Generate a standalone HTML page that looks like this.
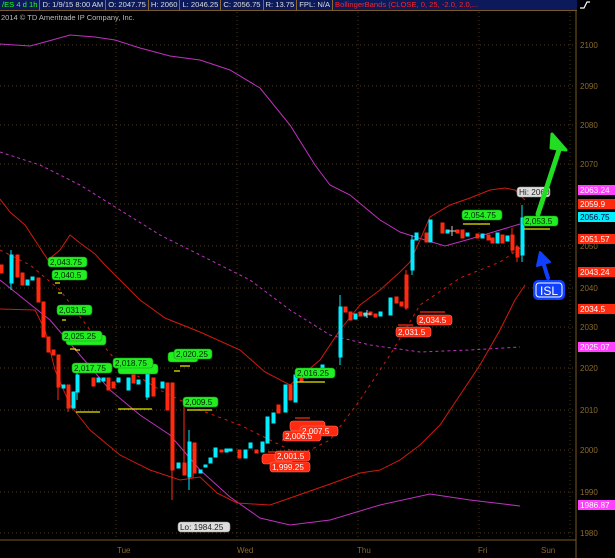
<!DOCTYPE html>
<html><head><meta charset="utf-8"><style>
html,body{margin:0;padding:0;background:#000;width:615px;height:558px;overflow:hidden;font-family:"Liberation Sans",sans-serif}
.bar{position:absolute;left:0;top:0;width:577px;height:10px;background:#0c1a5c;border-bottom:1px solid #7a5a20;display:flex;font-size:7.6px;line-height:10px;color:#ddd;white-space:nowrap}
.bar span{border-right:1px solid #8a6a2a;padding:0 2px}
</style></head><body>
<div class="bar"><span style="color:#2f2">/ES 4 d 1h</span><span>D: 1/9/15 8:00 AM</span><span>O: 2047.75</span><span>H: 2060</span><span>L: 2046.25</span><span>C: 2056.75</span><span>R: 13.75</span><span>FPL: N/A</span><span style="color:#f22;border:none">BollingerBands (CLOSE, 0, 25, -2.0, 2.0,...</span></div>
<svg width="615" height="558" style="position:absolute;left:0;top:0" font-family="Liberation Sans, sans-serif">
<rect x="577" y="0" width="38" height="11" fill="#000"/>
<path d="M580 8h4l3-6h3" stroke="#fff" fill="none" stroke-width="1.2"/>
<text x="1" y="20" fill="#bbb" font-size="7.5">2014 © TD Ameritrade IP Company, Inc.</text>
<g stroke="#6a5220" stroke-width="0.7" stroke-dasharray="1,3">
<path d="M0 45H575M0 86H575M0 125H575M0 164H575M0 204H575M0 246H575M0 288H575M0 327H575M0 368H575M0 410H575M0 450H575M0 492H575M0 533H575"/>
<path d="M116 12V540M237 12V540M358 12V540M479 12V540M570 12V540"/>
</g>
<line x1="576" y1="11" x2="576" y2="558" stroke="#7a5a20"/>
<line x1="0" y1="540" x2="576" y2="540" stroke="#7a5a20"/>
<g fill="#8a6a2a" font-size="8"><text x="580" y="48">2100</text><text x="580" y="89">2090</text><text x="580" y="128">2080</text><text x="580" y="167">2070</text><text x="580" y="249">2050</text><text x="580" y="291">2040</text><text x="580" y="330">2030</text><text x="580" y="371">2020</text><text x="580" y="413">2010</text><text x="580" y="453">2000</text><text x="580" y="495">1990</text><text x="580" y="536">1980</text>
<text x="117" y="553">Tue</text><text x="237" y="553">Wed</text><text x="357" y="553">Thu</text><text x="478" y="553">Fri</text><text x="541" y="553">Sun</text></g>
<g fill="none" stroke-width="1">
<path stroke="#c030c0" d="M0 44L30 46L45 42L70 35L95 37L115 40L140 48L170 56L200 60L230 70L260 88L290 125L315 165L330 185L350 195L380 220L400 232L425 240L445 246L470 239L490 233L520 224"/>
<path stroke="#c030c0" d="M0 280L50 320L80 355L110 390L140 415L170 435L200 470L230 497L260 518L290 525L330 520L380 505L430 494L470 500L520 506"/>
<path stroke="#c030c0" stroke-dasharray="3,3" d="M0 152L40 165L80 185L120 210L160 235L200 255L250 280L290 310L330 335L370 345L420 352L470 350L520 347"/>
<path stroke="#d01a10" d="M0 199L10 212L25 225L48 260L60 250L70 235L80 243L95 254L105 265L115 275L140 300L165 318L200 332L240 350L265 372L290 385L320 360L340 330L360 305L380 290L400 272L410 262L420 240L430 217L450 205L470 198L490 190L505 188L515 190L525 200"/>
<path stroke="#d01a10" d="M0 309L35 310L45 330L55 370L70 405L90 430L120 455L150 470L180 480L200 477L217 493L237 503L270 505L293 497L333 483L360 473L380 470L400 460L420 445L440 425L460 395L480 365L500 330L515 300L525 285"/>
<path stroke="#d01a10" stroke-dasharray="3,4" d="M0 250L30 265L60 290L90 330L120 365L160 390L200 410L240 425L280 445L300 455L330 440L360 400L390 355L420 305L460 278L500 262L525 245"/>
</g>
<g stroke-width="1">
<!-- candles: red -->
<g fill="#ff2a10" stroke="#ff2a10">
<rect x="0" y="265" width="3" height="8"/><rect x="16" y="255" width="3" height="22"/><rect x="21" y="273" width="3" height="12"/><rect x="37" y="278" width="3" height="24"/><rect x="42" y="302" width="3" height="35"/><rect x="47" y="337" width="3" height="15"/><rect x="52" y="350" width="3" height="5"/><rect x="57" y="355" width="3" height="32"/><rect x="67" y="385" width="3" height="23"/>
<rect x="92" y="378" width="3" height="8"/><rect x="107" y="378" width="3" height="12"/><rect x="112" y="382" width="3" height="6"/><rect x="132" y="375" width="3" height="8"/><rect x="152" y="378" width="3" height="18"/><rect x="166" y="383" width="3" height="27"/><rect x="171" y="383" width="3" height="87"/><rect x="183" y="463" width="3" height="12"/><rect x="193" y="443" width="3" height="30"/>
<rect x="220" y="450" width="3" height="2"/><rect x="238" y="450" width="3" height="8"/><rect x="255" y="450" width="3" height="3"/><rect x="277" y="405" width="3" height="8"/><rect x="289" y="385" width="3" height="15"/><rect x="300" y="376" width="3" height="6"/><rect x="310" y="372" width="3" height="5"/>
<rect x="344" y="307" width="3" height="5"/><rect x="349" y="312" width="3" height="8"/><rect x="359" y="312" width="3" height="4"/><rect x="369" y="312" width="3" height="3"/><rect x="374" y="314" width="3" height="3"/><rect x="395" y="297" width="3" height="6"/><rect x="400" y="302" width="3" height="4"/><rect x="405" y="275" width="3" height="33"/><rect x="425" y="233" width="3" height="9"/><rect x="441" y="223" width="3" height="10"/><rect x="456" y="230" width="3" height="3"/><rect x="461" y="230" width="3" height="8"/><rect x="476" y="234" width="3" height="4"/><rect x="487" y="235" width="3" height="5"/><rect x="491" y="238" width="3" height="5"/><rect x="501" y="235" width="3" height="8"/><rect x="511" y="235" width="3" height="15"/><rect x="516" y="247" width="3" height="10"/>
</g>
<g stroke="#ff2a10"><path d="M58 355V400M68 385V412M172 470V500M184 400V470M193 443V478M406 270V310M512 228V253M517 245V262"/></g>
<!-- candles: cyan -->
<g fill="#00eeff" stroke="#00eeff">
<rect x="10" y="255" width="3" height="28"/><rect x="26" y="280" width="3" height="5"/><rect x="31" y="277" width="3" height="3"/><rect x="62" y="385" width="3" height="3"/><rect x="72" y="392" width="3" height="16"/><rect x="76" y="375" width="3" height="17"/><rect x="97" y="378" width="3" height="4"/><rect x="102" y="378" width="3" height="3"/><rect x="117" y="378" width="3" height="4"/><rect x="127" y="378" width="3" height="12"/><rect x="137" y="380" width="3" height="4"/><rect x="146" y="372" width="3" height="25"/><rect x="161" y="382" width="3" height="6"/><rect x="177" y="463" width="3" height="5"/><rect x="188" y="442" width="3" height="35"/><rect x="199" y="470" width="3" height="3"/>
<rect x="204" y="465" width="3" height="2"/><rect x="209" y="458" width="3" height="5"/><rect x="214" y="448" width="3" height="9"/><rect x="225" y="449" width="3" height="3"/><rect x="229" y="449" width="3" height="2"/><rect x="244" y="450" width="3" height="8"/><rect x="249" y="443" width="3" height="5"/><rect x="261" y="442" width="3" height="10"/><rect x="266" y="417" width="3" height="26"/><rect x="272" y="413" width="3" height="10"/><rect x="284" y="385" width="3" height="27"/><rect x="294" y="375" width="3" height="27"/><rect x="305" y="373" width="3" height="5"/><rect x="315" y="370" width="3" height="4"/><rect x="321" y="365" width="3" height="5"/>
<rect x="339" y="307" width="3" height="50"/><rect x="354" y="314" width="3" height="5"/><rect x="364" y="313" width="3" height="3"/><rect x="379" y="312" width="3" height="4"/><rect x="389" y="298" width="3" height="17"/><rect x="411" y="240" width="3" height="30"/><rect x="415" y="233" width="3" height="7"/><rect x="429" y="220" width="3" height="22"/><rect x="446" y="230" width="3" height="3"/><rect x="466" y="233" width="3" height="3"/><rect x="481" y="234" width="3" height="4"/><rect x="496" y="233" width="3" height="10"/><rect x="506" y="236" width="3" height="5"/><rect x="521" y="218" width="3" height="37"/>
</g>
<g stroke="#00eeff"><path d="M11 250V290M77 370V400M147 365V400M189 430V490M340 295V365M412 235V275M522 205V262"/></g>
<g stroke="#ccc"><path d="M452 226V236M448 231H456M367 310V318M363 314H371"/></g>
</g>
<!-- level lines -->
<g stroke="#e8e800" stroke-width="1.2"><path d="M55 283H60M58 293H62M62 320H66M70 349H76M75 350H80M76 412H100M118 409H152M174 371H180M180 366H190M187 410H212M296 382H325M463 224H490M524 229H550"/></g>
<g stroke="#ff2a10" stroke-width="1.2"><path d="M420 312H445M398 325H413M295 418H310M300 428H320M282 440H300M268 452H290"/></g>
<!-- labels -->
<g font-size="8.2">
<g fill="#22ee22" stroke="#119911" stroke-width="0.6">
<rect x="48" y="257" width="39" height="10" rx="3"/><rect x="52" y="270" width="35" height="10" rx="3"/><rect x="57" y="305" width="35" height="10" rx="3"/><rect x="66" y="335" width="40" height="10" rx="3"/><rect x="62" y="331" width="40" height="10" rx="3"/><rect x="118" y="364" width="40" height="10" rx="3"/><rect x="113" y="358" width="40" height="10" rx="3"/><rect x="72" y="363" width="40" height="10" rx="3"/><rect x="168" y="352" width="30" height="10" rx="3"/><rect x="174" y="349" width="38" height="10" rx="3"/><rect x="183" y="397" width="35" height="10" rx="3"/><rect x="295" y="368" width="40" height="10" rx="3"/><rect x="462" y="210" width="40" height="10" rx="3"/><rect x="523" y="216" width="35" height="10" rx="3"/>
</g>
<g fill="#002200"><text x="50" y="265">2,043.75</text><text x="54" y="278">2,040.5</text><text x="59" y="313">2,031.5</text><text x="64" y="339">2,025.25</text><text x="115" y="366">2,018.75</text><text x="74" y="371">2,017.75</text><text x="176" y="357">2,020.25</text><text x="185" y="405">2,009.5</text><text x="297" y="376">2,016.25</text><text x="464" y="218">2,054.75</text><text x="525" y="224">2,053.5</text></g>
<g fill="#ff2a10" stroke="#ff7060" stroke-width="0.6">
<rect x="417" y="315" width="35" height="10" rx="3"/><rect x="396" y="327" width="35" height="10" rx="3"/><rect x="290" y="421" width="35" height="10" rx="3"/><rect x="300" y="426" width="38" height="10" rx="3"/><rect x="283" y="431" width="38" height="10" rx="3"/><rect x="262" y="454" width="30" height="10" rx="3"/><rect x="275" y="451" width="35" height="10" rx="3"/><rect x="270" y="462" width="40" height="10" rx="3"/>
</g>
<g fill="#fff"><text x="419" y="323">2,034.5</text><text x="398" y="335">2,031.5</text><text x="302" y="434">2,007.5</text><text x="285" y="439">2,006.5</text><text x="277" y="459">2,001.5</text><text x="272" y="470">1,999.25</text></g>
<g fill="#ddd" stroke="#999" stroke-width="0.6"><rect x="517" y="187" width="33" height="10" rx="3"/><rect x="178" y="522" width="52" height="10" rx="3"/></g>
<g fill="#222"><text x="519" y="195">Hi: 2060</text><text x="180" y="530">Lo: 1984.25</text></g>
</g>
<!-- right price tags -->
<g font-size="8.2">
<rect x="578" y="185" width="37" height="10" fill="#ff40ff"/><text x="580" y="193" fill="#fff">2063.24</text>
<rect x="578" y="199" width="37" height="10" fill="#ff2a10"/><text x="580" y="207" fill="#fff">2059.9</text>
<rect x="578" y="212" width="37" height="10" fill="#00eeff"/><text x="580" y="220" fill="#003">2056.75</text>
<rect x="578" y="234" width="37" height="10" fill="#ff2a10"/><text x="580" y="242" fill="#fff">2051.57</text>
<rect x="578" y="267" width="37" height="10" fill="#ff2a10"/><text x="580" y="275" fill="#fff">2043.24</text>
<rect x="578" y="304" width="37" height="10" fill="#ff2a10"/><text x="580" y="312" fill="#fff">2034.5</text>
<rect x="578" y="342" width="37" height="10" fill="#ff40ff"/><text x="580" y="350" fill="#fff">2025.07</text>
<rect x="578" y="500" width="37" height="10" fill="#ff40ff"/><text x="580" y="508" fill="#fff">1986.87</text>
</g>
<!-- arrows -->
<path d="M538 214L559 150" stroke="#22dd22" stroke-width="5" stroke-linecap="round"/>
<path d="M552 134L566 150L551 148Z" fill="#22dd22" stroke="#22dd22" stroke-width="3" stroke-linejoin="round"/>
<path d="M548 278L543 262" stroke="#1040ff" stroke-width="4" stroke-linecap="round"/>
<path d="M540 252L550 262L537 266Z" fill="#1040ff" stroke="#1040ff" stroke-width="2" stroke-linejoin="round"/>
<rect x="533" y="280" width="32" height="20" rx="5" fill="#1040ff"/>
<rect x="536" y="283" width="26" height="14" rx="3" fill="#1040ff" stroke="#fff" stroke-width="1"/>
<text x="540" y="295" fill="#fff" font-size="12">ISL</text>
</svg>
</body></html>
